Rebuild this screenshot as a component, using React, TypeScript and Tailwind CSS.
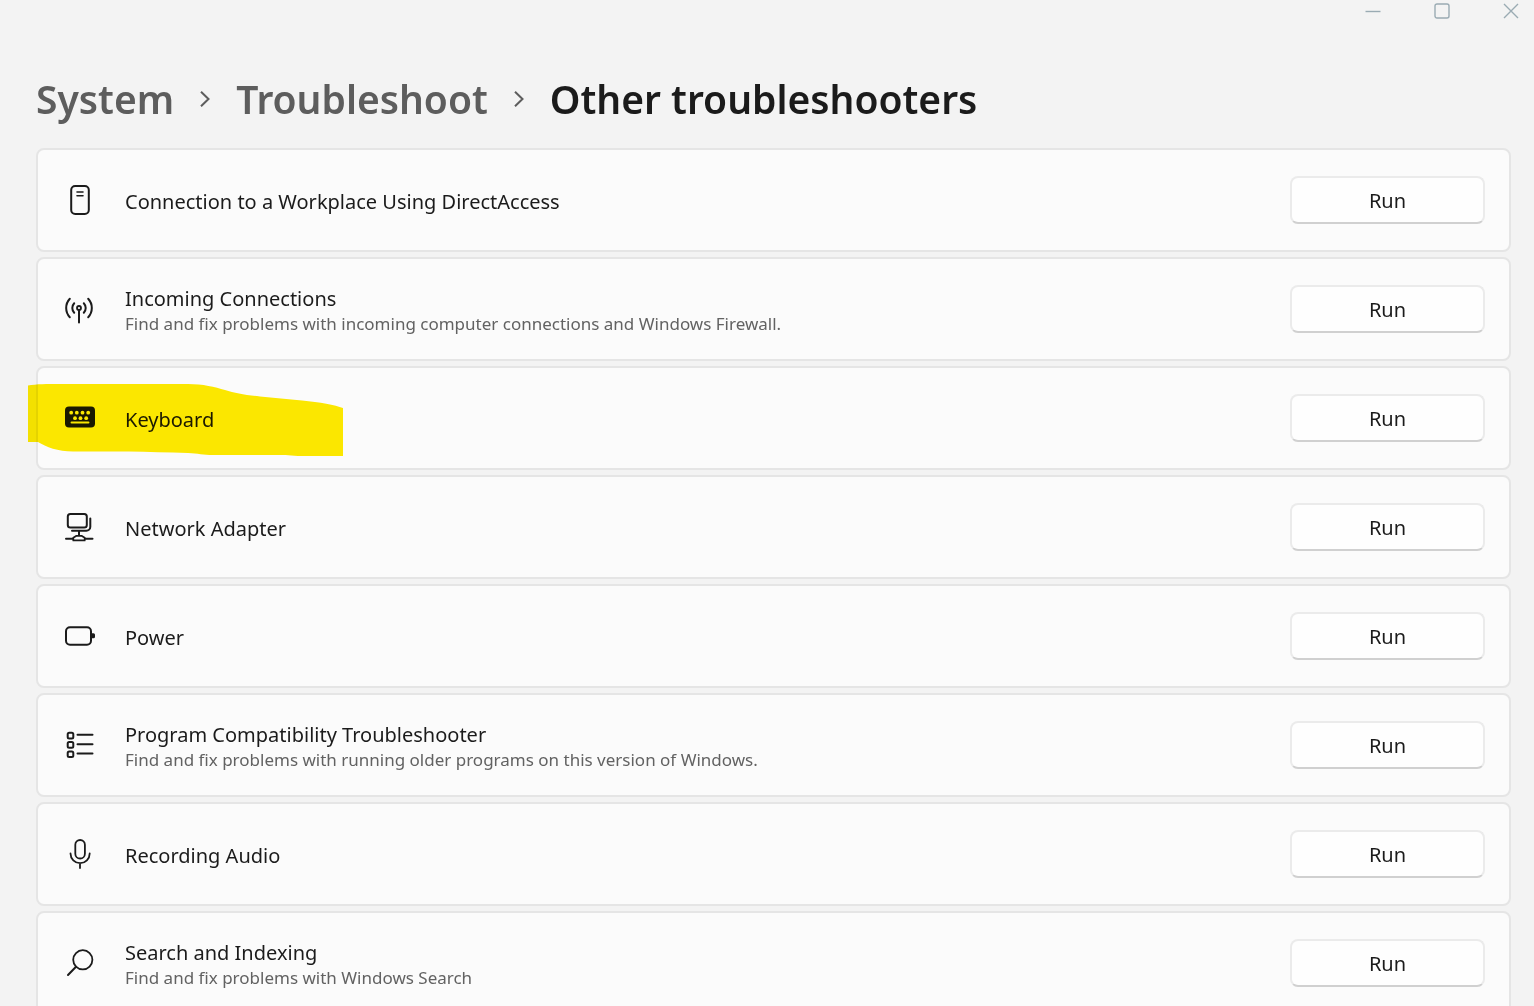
import type { ReactNode } from "react";

type Troubleshooter = {
  title: string;
  description?: string;
  icon: ReactNode;
  highlighted?: boolean;
};

function Icon({ children }: { children: ReactNode }) {
  return (
    <svg
      className="size-8 shrink-0"
      viewBox="0 0 32 32"
      fill="none"
      stroke="currentColor"
      strokeWidth={2}
      strokeLinecap="round"
      strokeLinejoin="round"
      aria-hidden="true"
    >
      {children}
    </svg>
  );
}

const troubleshooters: Troubleshooter[] = [
  {
    title: "Connection to a Workplace Using DirectAccess",
    icon: (
      <Icon>
        <rect x="7.2" y="2" width="17.6" height="28" rx="4" />
        <path d="M13 8h6M13 11.8h6" strokeWidth={1.6} />
      </Icon>
    ),
  },
  {
    title: "Incoming Connections",
    description: "Find and fix problems with incoming computer connections and Windows Firewall.",
    icon: (
      <Icon>
        <circle cx="15" cy="15" r="2" strokeWidth={1.8} />
        <path d="M15 17.5V29.5" />
        <path d="M10.2 10.2a7 7 0 0 0 0 9.6M19.8 10.2a7 7 0 0 1 0 9.6" />
        <path d="M5.8 5.8a13.5 13.5 0 0 0 0 18.4M24.2 5.8a13.5 13.5 0 0 1 0 18.4" />
      </Icon>
    ),
  },
  {
    title: "Keyboard",
    highlighted: true,
    icon: (
      <Icon>
        <rect x="1" y="4.5" width="30" height="21" rx="4" fill="currentColor" stroke="none" />
        <g fill="#fbfbfb" stroke="none">
          <circle cx="7.2" cy="10.7" r="1.9" />
          <circle cx="12.8" cy="10.7" r="1.9" />
          <circle cx="18.5" cy="10.7" r="1.9" />
          <circle cx="24.2" cy="10.7" r="1.9" />
          <circle cx="11" cy="16.2" r="1.9" />
          <circle cx="16.5" cy="16.2" r="1.9" />
          <circle cx="22.2" cy="16.2" r="1.9" />
        </g>
        <path d="M7.5 20.5h17" stroke="#fbfbfb" strokeWidth={1.9} />
      </Icon>
    ),
  },
  {
    title: "Network Adapter",
    icon: (
      <Icon>
        <rect x="3.8" y="3" width="19" height="13.6" rx="2.5" />
        <path d="M26.3 7.5v8.3a4 4 0 0 1-4 4H8" />
        <path d="M15 20v4M2 27.8h7M21 27.8h7.5" />
        <path d="M9.3 26.8l3.2-2h5l3.2 2v2.6H9.3z" strokeWidth={1.8} />
      </Icon>
    ),
  },
  {
    title: "Power",
    icon: (
      <Icon>
        <rect x="2" y="7.3" width="25" height="17.5" rx="4" />
        <path d="M28 13.3h1.5a1.5 1.5 0 0 1 1.5 1.5v2a1.5 1.5 0 0 1-1.5 1.5H28z" fill="currentColor" stroke="none" />
      </Icon>
    ),
  },
  {
    title: "Program Compatibility Troubleshooter",
    description: "Find and fix problems with running older programs on this version of Windows.",
    icon: (
      <Icon>
        <rect x="3.7" y="3.8" width="5.6" height="5.6" rx="1.5" />
        <rect x="3.7" y="13.1" width="5.6" height="5.6" rx="1.5" />
        <rect x="3.7" y="22.4" width="5.6" height="5.6" rx="1.5" />
        <path d="M13.5 5.8h15M13.5 15.2h15M13.5 24.6h15" />
      </Icon>
    ),
  },
  {
    title: "Recording Audio",
    icon: (
      <Icon>
        <rect x="11.3" y="2" width="9.6" height="18.5" rx="4.8" strokeWidth={1.8} />
        <path d="M6.5 15.5a9.6 9.6 0 0 0 19.2 0M16 25.2V30" strokeWidth={1.8} />
      </Icon>
    ),
  },
  {
    title: "Search and Indexing",
    description: "Find and fix problems with Windows Search",
    icon: (
      <Icon>
        <circle cx="18.8" cy="12.8" r="9.6" strokeWidth={1.8} />
        <path d="M12 19.8L4 28" />
      </Icon>
    ),
  },
];

function WindowControls() {
  const controls = [
    { label: "Minimize", path: "M0.5 8.5h15" },
    { label: "Maximize", path: "M3 1h10a2 2 0 0 1 2 2v10a2 2 0 0 1-2 2H3a2 2 0 0 1-2-2V3a2 2 0 0 1 2-2z" },
    { label: "Close", path: "M1 1l14 14M15 1L1 15" },
  ];

  return (
    <div className="flex justify-end gap-[23px]">
      {controls.map((control) => (
        <button
          key={control.label}
          type="button"
          aria-label={control.label}
          className="flex h-[21px] w-[46px] items-center justify-center text-[#9aabb3]"
        >
          <svg className="size-4" viewBox="0 0 16 16" fill="none" stroke="currentColor" strokeWidth={1.4}>
            <path d={control.path} />
          </svg>
        </button>
      ))}
    </div>
  );
}

function Chevron() {
  return (
    <svg
      className="h-4 w-3 shrink-0 text-[#5d5d5d]"
      viewBox="0 0 12 16"
      fill="none"
      stroke="currentColor"
      strokeWidth={2}
      aria-hidden="true"
    >
      <path d="M2 0.8L9.5 8L2 15.2" />
    </svg>
  );
}

function Breadcrumb() {
  return (
    <nav aria-label="Breadcrumb" className="flex items-center gap-[25px] pt-[50px] pb-[21px] text-[39px] leading-[56px] font-semibold">
      <a href="#system" className="text-[#5d5d5d]">
        System
      </a>
      <Chevron />
      <a href="#troubleshoot" className="text-[#5d5d5d]">
        Troubleshoot
      </a>
      <Chevron />
      <h1>Other troubleshooters</h1>
    </nav>
  );
}

/* Marker stroke drawn over the row */
function Highlight() {
  return (
    <svg
      className="pointer-events-none absolute top-4 -left-2.5 h-[72px] w-[315px] mix-blend-multiply"
      viewBox="0 0 315 72"
      aria-hidden="true"
    >
      <path
        fill="#ffeb00"
        d="M0 1.5C8 0 20 0 30 0H160C175 0 187 3 197 6C207 9 217 11 232 12.5L274 16.5C292 18 307 21 315 24V72H270C260 71 255 71 245 71H185C175 71 170 69.5 160 69C120 67.5 80 67.5 45 67.5C30 67.5 18 63 10 58H0Z"
      />
    </svg>
  );
}

function Row({ title, description, icon, highlighted }: Troubleshooter) {
  return (
    <li className="relative flex h-[104px] items-center gap-[29px] rounded-lg border-2 border-[#e5e5e5] bg-[#fbfbfb] pr-6 pl-[26px]">
      {icon}
      <div className="min-w-0 flex-1 pt-1">
        <h2 className="text-[20px] leading-[26px]">{title}</h2>
        {description && <p className="text-[17px] leading-6 text-[#626262]">{description}</p>}
      </div>
      <button
        type="button"
        aria-label={`Run ${title}`}
        className="h-12 w-[195px] shrink-0 rounded-lg border-2 border-[#ebebeb] border-b-[#d0d0d0] bg-[#fefefe] pt-0.5 text-[20px] leading-[26px]"
      >
        Run
      </button>
      {highlighted && <Highlight />}
    </li>
  );
}

export default function App() {
  return (
    <div className="h-screen overflow-hidden bg-[#f3f3f3] font-['Noto_Sans',sans-serif] text-[#1b1b1b]">
      <WindowControls />
      <main className="pr-[23px] pl-9">
        <Breadcrumb />
        <ul className="flex flex-col gap-[5px]">
          {troubleshooters.map((item) => (
            <Row key={item.title} {...item} />
          ))}
        </ul>
      </main>
    </div>
  );
}
